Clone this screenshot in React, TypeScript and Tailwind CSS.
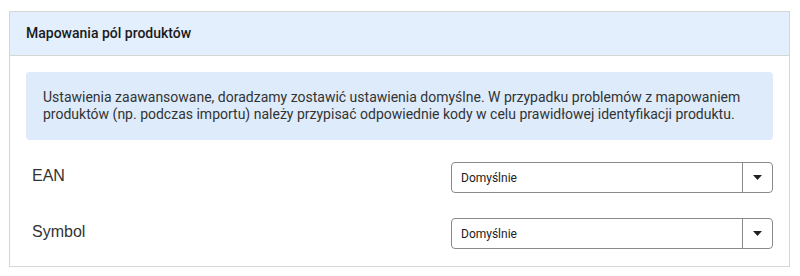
import React from "react";

function Select() {
  return (
    <div className="flex h-[31px] w-[322px] items-stretch rounded-[4px] border border-[#8a8a8a] bg-white">
      <div className="flex flex-1 items-center pl-[9px] text-[12px] text-[#222]">
        Domyślnie
      </div>
      <div className="flex w-[30px] items-center justify-center border-l border-[#8a8a8a]">
        <svg width="9" height="5" viewBox="0 0 9 5">
          <path d="M0 0 L9 0 L4.5 5 Z" fill="#222" />
        </svg>
      </div>
    </div>
  );
}

export default function App() {
  return (
    <div className="h-[276px] w-[800px] bg-white pl-[9px] pr-[10px] pt-[11px] font-['Roboto',sans-serif]">
      <div className="border border-[#d6d6d6]">
        <div className="flex h-[44px] items-center border-b border-[#d6d6d6] bg-[#e3effd] pl-[16px] text-[14px] font-medium text-[#1a1a1a]">
          Mapowania pól produktów
        </div>
        <div className="px-[16px] pb-[17px] pt-[16px]">
          <div className="rounded-[4px] bg-[#ddebfb] px-[17px] pb-[17px] pt-[17px] text-[14px] leading-[17px] text-[#333]">
            Ustawienia zaawansowane, doradzamy zostawić ustawienia domyślne. W przypadku problemów z mapowaniem
            <br />
            produktów (np. podczas importu) należy przypisać odpowiednie kody w celu prawidłowej identyfikacji produktu.
          </div>
          <div className="mt-[22px] flex items-center">
            <div className="w-[425px] pb-[4px] pl-[6px] font-['Liberation_Sans',Arial,sans-serif] text-[16px] text-[#333]">EAN</div>
            <Select />
          </div>
          <div className="mt-[25px] flex items-center">
            <div className="w-[425px] pb-[4px] pl-[6px] font-['Liberation_Sans',Arial,sans-serif] text-[16px] text-[#333]">Symbol</div>
            <Select />
          </div>
        </div>
      </div>
    </div>
  );
}
